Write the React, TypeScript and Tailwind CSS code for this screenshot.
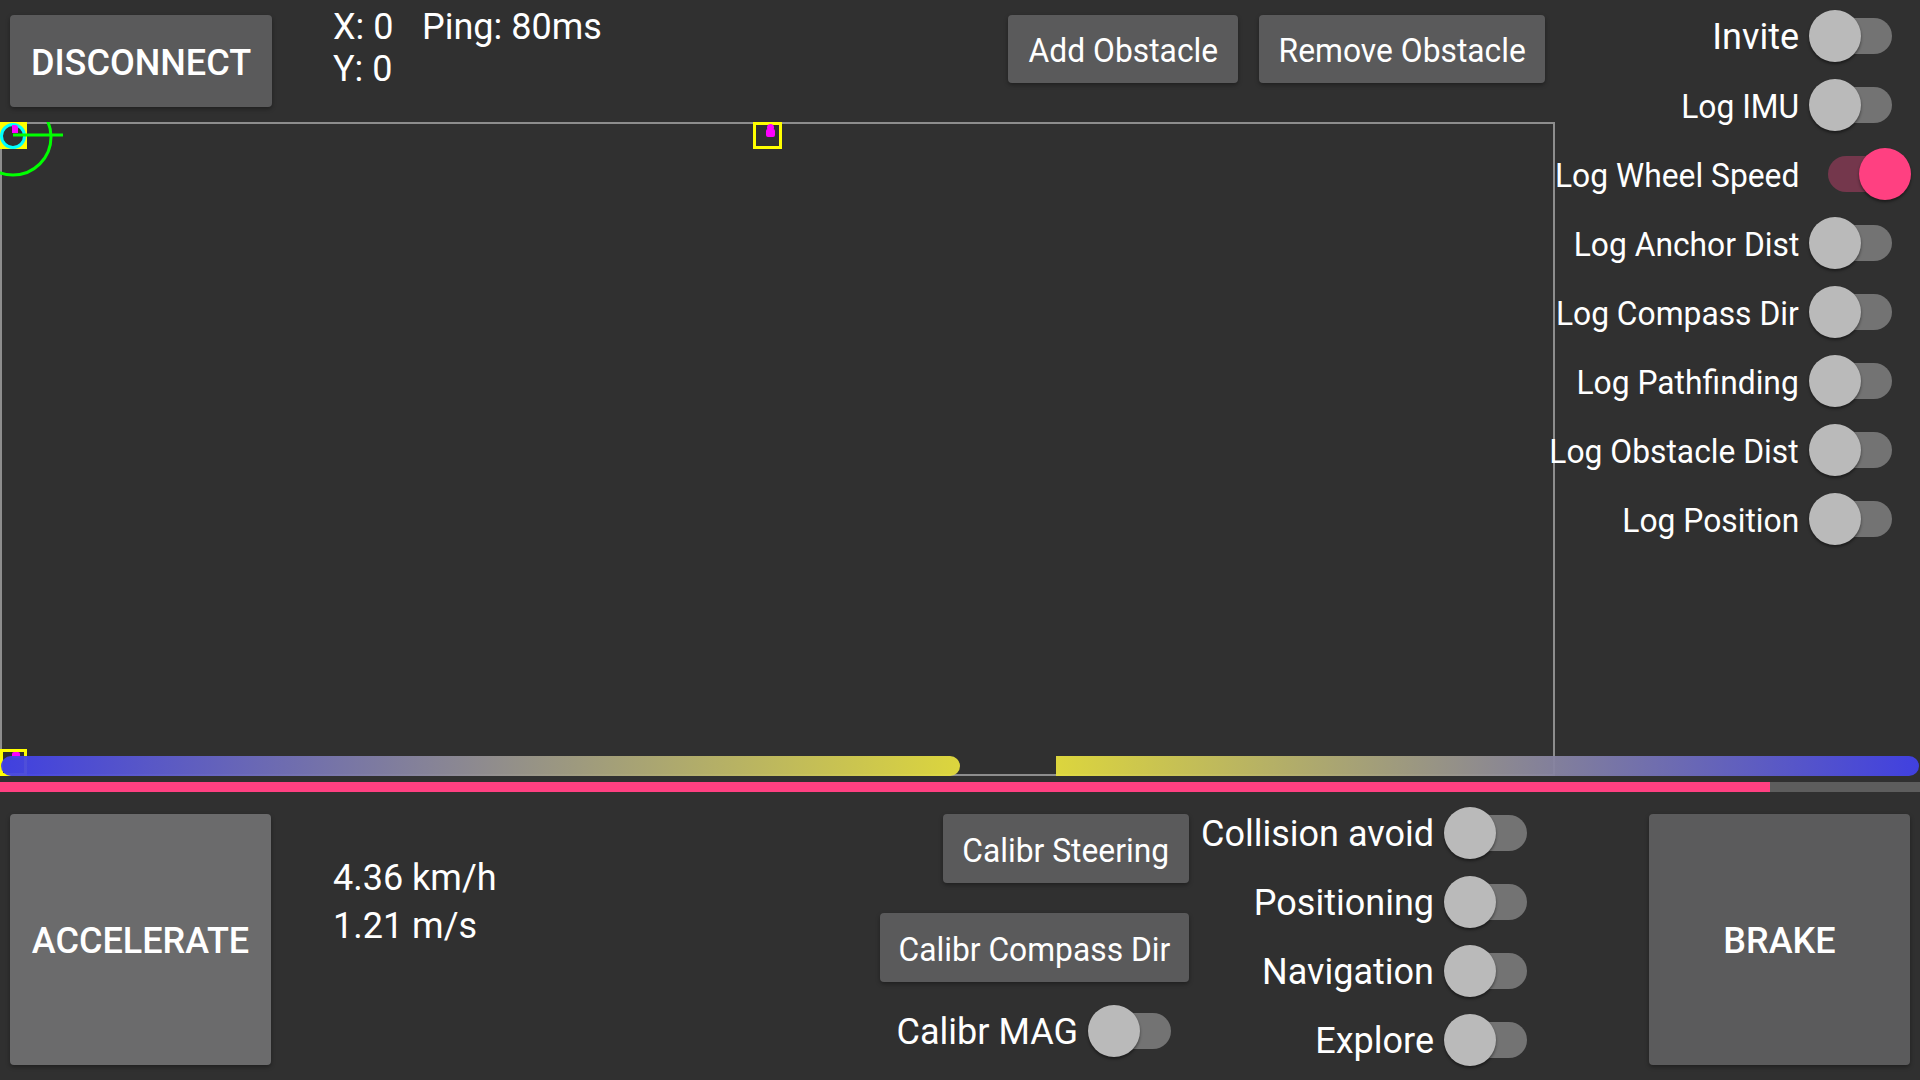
import clsx from 'clsx';

const TOP_TOGGLES = [
  { label: 'Invite', on: false, narrow: false },
  { label: 'Log IMU', on: false, narrow: true },
  { label: 'Log Wheel Speed', on: true, narrow: true },
  { label: 'Log Anchor Dist', on: false, narrow: true },
  { label: 'Log Compass Dir', on: false, narrow: true },
  { label: 'Log Pathfinding', on: false, narrow: true },
  { label: 'Log Obstacle Dist', on: false, narrow: true },
  { label: 'Log Position', on: false, narrow: true },
];

const MODE_TOGGLES = ['Collision avoid', 'Positioning', 'Navigation', 'Explore'];

function Switch({ on = false }: { on?: boolean }) {
  return (
    <div className="relative h-[52px] w-[101px] shrink-0">
      <div
        className={clsx(
          'absolute left-[19px] top-[8px] h-[36px] w-[64px] rounded-full',
          on ? 'bg-[#74374c]' : 'bg-[#737373]'
        )}
      />
      <div
        className={clsx(
          'absolute top-0 h-[52px] w-[52px] rounded-full shadow-[0_2px_3px_rgba(0,0,0,0.45)]',
          on ? 'left-[50px] bg-[#ff4081]' : 'left-0 bg-[#bababa]'
        )}
      />
    </div>
  );
}

function Toggle({ label, on = false, narrow = false }: { label: string; on?: boolean; narrow?: boolean }) {
  return (
    <div className="flex h-[69px] shrink-0 items-center justify-end gap-[10px]">
      <span
        className={clsx(
          'inline-block shrink-0 whitespace-nowrap pt-[2px] leading-none text-white',
          narrow ? 'origin-right scale-x-[0.935] text-[34px]' : 'text-[36px]'
        )}
      >
        {label}
      </span>
      <Switch on={on} />
    </div>
  );
}

function GrayButton({ label, className }: { label: string; className: string }) {
  return (
    <button
      className={clsx(
        'flex items-center justify-center rounded-[4px] bg-[#5a5a5b] pt-[3px] text-[34px] shadow-[0_2px_4px_rgba(0,0,0,0.35)]',
        className
      )}
    >
      <span className="inline-block scale-x-[0.935] whitespace-nowrap">{label}</span>
    </button>
  );
}

function Canvas() {
  return (
    <div className="relative h-[654px] w-[1555px] border-2 border-[#8d8d8d]">
      {/* robot, anchors and heading drawn on the map */}
      <svg className="absolute left-[-2px] top-[-2px]" width="1555" height="654" viewBox="0 0 1555 654">
        <rect x="0" y="0" width="27" height="27" fill="#ffff00" />
        <circle cx="13" cy="14" r="11.5" fill="#303030" stroke="#00ffff" strokeWidth="3" />
        <path d="M12 3 h3 q3 0 3 3 v5 h-6 z" fill="#ff00ff" />
        <circle cx="13" cy="15" r="38" fill="none" stroke="#00ff00" strokeWidth="3" />
        <line x1="13" y1="13" x2="63" y2="13" stroke="#00ff00" strokeWidth="3" />

        <rect x="754.5" y="1.5" width="26" height="24" fill="none" stroke="#ffff00" strokeWidth="3" />
        <circle cx="770.5" cy="5.5" r="3.5" fill="#ff00ff" />
        <rect x="766" y="7" width="9" height="8" rx="2" fill="#ff00ff" />

        <rect x="1.5" y="628.5" width="24" height="24" fill="none" stroke="#ffff00" strokeWidth="3" />
        <rect x="12" y="630" width="8" height="6" rx="2" fill="#ff00ff" />
      </svg>
    </div>
  );
}

export default function App() {
  return (
    <div className="h-[1080px] w-[1920px] overflow-hidden bg-[#303030] font-['Roboto','Noto_Sans',sans-serif] text-white">
      {/* Upper area: controls, map and log switches */}
      <div className="relative flex h-[776px]">
        <div className="flex w-[1555px] shrink-0 flex-col">
          <div className="flex h-[122px] items-start">
            <button className="ml-[10px] mt-[15px] flex h-[92px] w-[262px] items-center justify-center rounded-[4px] bg-[#5a5a5b] pt-[4px] text-[36px] font-medium shadow-[0_2px_4px_rgba(0,0,0,0.35)]">
              DISCONNECT
            </button>
            <div className="ml-[61px] mt-[6px] text-[36px] leading-[42px]">
              <div className="flex">
                <span className="w-[89px]">X: 0</span>
                <span>Ping: 80ms</span>
              </div>
              <div>Y: 0</div>
            </div>
            <div className="ml-auto mr-[10px] mt-[15px] flex gap-[21px]">
              <GrayButton label="Add Obstacle" className="h-[68px] w-[230px]" />
              <GrayButton label="Remove Obstacle" className="h-[68px] w-[286px]" />
            </div>
          </div>
          <Canvas />
        </div>

        <div className="flex w-[365px] shrink-0 flex-col pr-[10px] pt-[1px]">
          {TOP_TOGGLES.map(t => (
            <Toggle key={t.label} label={t.label} on={t.on} narrow={t.narrow} />
          ))}
        </div>

        {/* steering bars */}
        <div className="absolute left-[1px] top-[756px] h-[20px] w-[959px] rounded-full bg-linear-to-r/srgb from-[#4141e9] to-[#e5de3e] opacity-95" />
        <div className="absolute left-[1056px] top-[756px] h-[20px] w-[863px] rounded-r-full bg-linear-to-r/srgb from-[#e5de3e] to-[#4141e9] opacity-95" />
      </div>

      {/* throttle bar */}
      <div className="mt-[6px] flex h-[10px]">
        <div className="w-[1770px] bg-[#ff4081]" />
        <div className="flex-1 bg-[#5d5d5d]" />
      </div>

      {/* Lower area: drive buttons, speed, calibration and modes */}
      <div className="mt-[6px] flex h-[282px] items-start">
        <button className="ml-[10px] mt-[16px] flex h-[251px] w-[261px] shrink-0 items-center justify-center rounded-[4px] bg-[#6b6b6c] pt-[2px] text-[36px] font-medium shadow-[0_2px_4px_rgba(0,0,0,0.35)]">
          ACCELERATE
        </button>
        <div className="ml-[62px] mt-[56px] min-w-0 flex-1 text-[36px] leading-[48px]">
          <div>4.36 km/h</div>
          <div>1.21 m/s</div>
        </div>
        <div className="mt-[16px] flex w-[309px] shrink-0 flex-col items-end">
          <GrayButton label="Calibr Steering" className="h-[69px] w-[246px]" />
          <GrayButton label="Calibr Compass Dir" className="mt-[30px] h-[69px] w-[309px]" />
          <div className="mt-[23px] flex h-[52px] items-center gap-[10px]">
            <span className="whitespace-nowrap pt-[2px] text-[36px] leading-none">Calibr MAG</span>
            <Switch />
          </div>
        </div>
        <div className="flex w-[356px] shrink-0 flex-col">
          {MODE_TOGGLES.map(label => (
            <Toggle key={label} label={label} />
          ))}
        </div>
        <button className="ml-[104px] mr-[10px] mt-[16px] flex h-[251px] w-[261px] shrink-0 items-center justify-center rounded-[4px] bg-[#5b5b5c] pt-[3px] text-[36px] font-medium shadow-[0_2px_4px_rgba(0,0,0,0.35)]">
          BRAKE
        </button>
      </div>
    </div>
  );
}
